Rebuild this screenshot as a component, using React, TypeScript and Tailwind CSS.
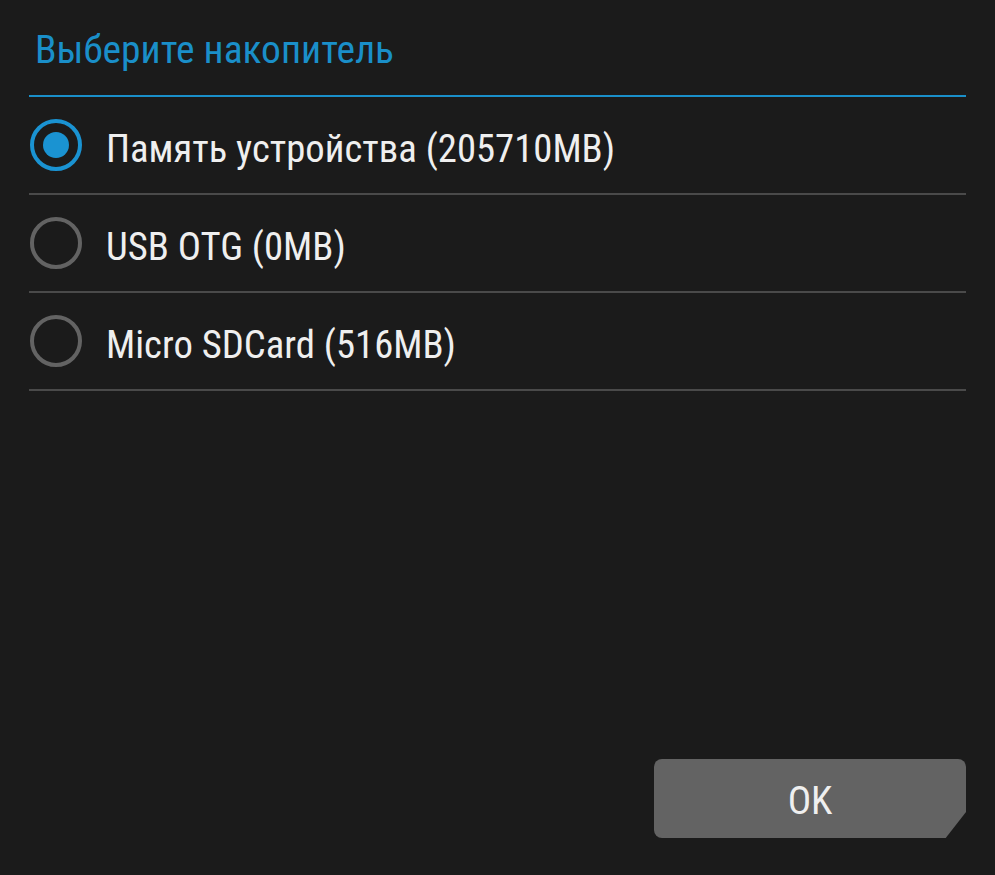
import React from "react";

const items = [
  { label: "Память устройства (205710MB)", checked: true },
  { label: "USB OTG (0MB)", checked: false },
  { label: "Micro SDCard (516MB)", checked: false },
];

function Radio({ checked }: { checked: boolean }) {
  return (
    <svg width="54" height="54" viewBox="0 0 54 54" className="shrink-0">
      <circle cx="27" cy="27" r="24" fill="none" stroke={checked ? "#1a93d2" : "#636363"} strokeWidth="4" />
      {checked && <circle cx="27" cy="27" r="13" fill="#1a93d2" />}
    </svg>
  );
}

export default function App() {
  return (
    <div
      className="w-[995px] h-[875px] bg-[#1b1b1b] flex flex-col px-[29px] overflow-hidden"
      style={{ fontFamily: '"Roboto Condensed", Roboto, "Liberation Sans", sans-serif' }}
    >
      <div className="h-[97px] border-b-2 border-[#1a8fc9] flex items-center pl-[6px] pt-[4px]">
        <span className="text-[#1a8fc9] text-[39.5px] leading-none">Выберите накопитель</span>
      </div>
      {items.map((it) => (
        <div key={it.label} className="h-[98px] border-b-2 border-[#4a4a4a] flex items-center gap-[23px]">
          <Radio checked={it.checked} />
          <span className="text-[#efefef] text-[38.7px] leading-none pt-[8px]">{it.label}</span>
        </div>
      ))}
      <div className="flex-1" />
      <div className="flex justify-end pb-[37px]">
        <button
          className="w-[312px] h-[79px] bg-[#636363] rounded-[8px] text-[#efefef] text-[39px] flex items-center justify-center pt-[5px]"
          style={{ clipPath: "polygon(0 0, 100% 0, 100% 67%, 93.5% 100%, 0 100%)" }}
        >
          OK
        </button>
      </div>
    </div>
  );
}
